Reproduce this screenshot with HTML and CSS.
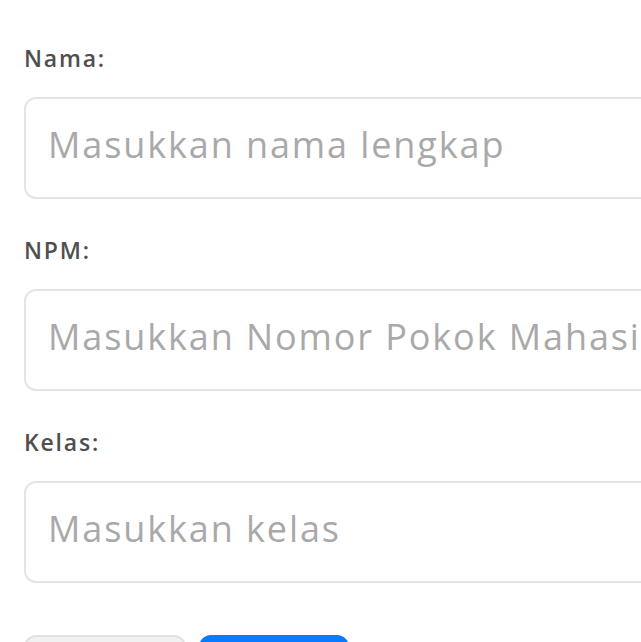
FILE: index.html
```html
<!DOCTYPE html>
<html lang="id">
<head>
<meta charset="utf-8">
<title>Form Mahasiswa</title>
<link rel="stylesheet" href="styles.css">
</head>
<body>
<form class="form">
  <div class="field">
    <label class="label" for="nama">Nama:</label>
    <input class="input" id="nama" type="text" placeholder="Masukkan nama lengkap">
  </div>
  <div class="field">
    <label class="label" for="npm">NPM:</label>
    <input class="input" id="npm" type="text" placeholder="Masukkan Nomor Pokok Mahasiswa">
  </div>
  <div class="field">
    <label class="label" for="kelas">Kelas:</label>
    <input class="input" id="kelas" type="text" placeholder="Masukkan kelas">
  </div>
  <div class="actions">
    <button class="btn btn-reset" type="reset">Reset</button>
    <button class="btn btn-submit" type="submit">Simpan</button>
  </div>
</form>
</body>
</html>
```
FILE: styles.css
```css
html, body {
  margin: 0;
  padding: 0;
  background: #ffffff;
  overflow: hidden;
}
body {
  font-family: "Open Sans", "Liberation Sans", sans-serif;
}
.form {
  width: 720px;
  padding: 42px 0 0 24px;
}
.field {
  display: flex;
  flex-direction: column;
  margin-bottom: 35px;
}
.label {
  font-size: 23px;
  line-height: 32px;
  font-weight: 600;
  letter-spacing: 1.8px;
  color: #4f4f4f;
  margin-bottom: 23px;
}
.input {
  box-sizing: border-box;
  height: 102px;
  width: 100%;
  border: 2px solid #e4e4e4;
  border-radius: 12px;
  padding: 0 22px 8px;
  font-family: "Open Sans", "Liberation Sans", sans-serif;
  font-size: 36px;
  letter-spacing: 1.9px;
  color: #333333;
  background: #ffffff;
  outline: none;
}
.input::placeholder {
  color: #a9a9a9;
}
.actions {
  display: flex;
  gap: 13px;
  margin-top: 52px;
}
.btn {
  height: 64px;
  border-radius: 12px;
  font-family: "Open Sans", "Liberation Sans", sans-serif;
  font-size: 22px;
  font-weight: 600;
}
.btn-reset {
  width: 162px;
  background: #f1f1f1;
  border: 2px solid #e2e2e2;
  color: #555555;
}
.btn-submit {
  width: 150px;
  background: #0a7bff;
  border: 2px solid #0a7bff;
  color: #ffffff;
}
```
